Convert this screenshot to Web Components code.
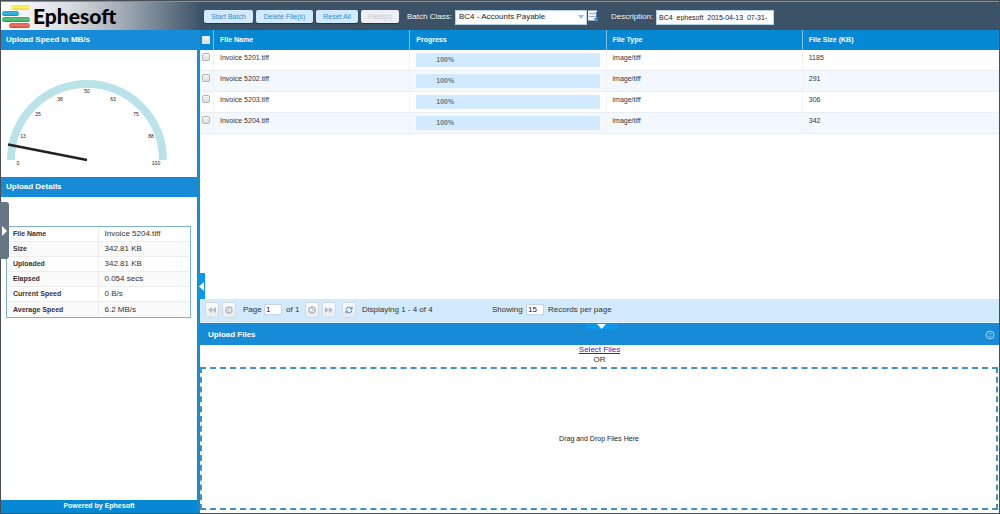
<!DOCTYPE html>
<html lang="en">
<head>
<meta charset="utf-8">
<title>Ephesoft - Upload Batch</title>
<style>
  html, body { margin: 0; height: 100%; }
  body { font: 8px/12px "Liberation Sans", Arial, sans-serif; color: #333; background: #fff; }
</style>
</head>
<body>
<eph-app></eph-app>
<script>
const define = (name, html, init) => {
  const tpl = document.createElement('template');
  tpl.innerHTML = html;
  customElements.define(name, class extends HTMLElement {
    constructor() {
      super();
      this.attachShadow({ mode: 'open' }).append(tpl.content.cloneNode(true));
    }
    connectedCallback() { if (init && !this.ready) { this.ready = true; init(this, this.shadowRoot); } }
  });
};

define('eph-logo', `
<style>
  :host { display: flex; align-items: center; gap: 3px; padding-left: 1px; color: #000; font: 900 21px/26px Lato, "Open Sans", sans-serif; }
  svg { display: block; flex: none; }
</style>
<svg width="28" height="26" viewBox="0 0 28 26" aria-hidden="true">
  <defs>
    <linearGradient id="y" x2="0" y2="1"><stop stop-color="#f6e84c"/><stop offset=".5" stop-color="#f9f06a"/><stop offset="1" stop-color="#e8d53a"/></linearGradient>
    <linearGradient id="b" x2="0" y2="1"><stop stop-color="#2a9fcf"/><stop offset=".5" stop-color="#3db4dc"/><stop offset="1" stop-color="#1c89b8"/></linearGradient>
    <linearGradient id="g" x2="0" y2="1"><stop stop-color="#3fae62"/><stop offset=".5" stop-color="#58c27a"/><stop offset="1" stop-color="#2f9550"/></linearGradient>
    <linearGradient id="r" x2="0" y2="1"><stop stop-color="#e05a4c"/><stop offset=".5" stop-color="#ee7565"/><stop offset="1" stop-color="#cc4638"/></linearGradient>
  </defs>
  <rect x="9" y="2" width="19" height="5" rx="2.500" fill="url(#y)"/>
  <rect x="0" y="8" width="17" height="5" rx="2.500" fill="url(#b)"/>
  <rect x="0" y="14" width="28" height="5" rx="2.500" fill="url(#g)"/>
  <rect x="7" y="20" width="21" height="5" rx="2.500" fill="url(#r)"/>
</svg>
<span>Ephesoft</span>`);

define('eph-button', `
<style>
  :host { display: block; }
  button { box-sizing: border-box; width: 100%; height: 13px; padding: 0; border: 0; border-radius: 2px;
    background: #d1eafd; color: #2b8fce; font: inherit; line-height: 13px; white-space: nowrap;
    box-shadow: 0 1px 1px #1f3242; cursor: pointer; }
  button:disabled { background: #eceff3; color: #bfc6cd; cursor: default; }
</style>
<button type="button"><slot></slot></button>`,
(host, root) => { root.querySelector('button').disabled = host.hasAttribute('disabled'); });

define('eph-toolbar', `
<style>
  :host { display: flex; align-items: center; height: 29px; box-sizing: border-box; border-top: 1px solid #8b8f94;
    background: linear-gradient(90deg, #fff 0, #dfe2e5 60px, #a3adb7 120px, #3c5367 200px); color: #f1f5f8; font-size: 7px; white-space: nowrap; }
  eph-logo { flex: 0 0 202px; }
  .buttons { display: grid; grid-template-columns: 49px 57px 42px 38px; gap: 3px; margin: 0 8px 0 0; }
  label { width: 45px; margin: 2px 3px 0 0; font-size: 8px; line-height: 12px; }
  select, input { box-sizing: border-box; height: 15px; margin: 2px 0 0; padding: 0 3px; border: 1px solid #b5d4ea; border-radius: 0;
    background: #fff; color: #222; font: inherit; }
  .pick { display: grid; width: 132px; }
  select { grid-area: 1 / 1; appearance: none; width: 100%; font-size: 8px; }
  .arrow { grid-area: 1 / 1; justify-self: end; align-self: center; margin: 2px 3px 0 0; pointer-events: none; }
  .list { margin: 0 13px 0 1px; }
  input { width: 118px; padding: 0 2px; font-size: 7px; line-height: 13px; }
  .wide { width: 42px; }
</style>
<eph-logo></eph-logo>
<div class="buttons">
  <eph-button>Start Batch</eph-button>
  <eph-button>Delete File(s)</eph-button>
  <eph-button>Reset All</eph-button>
  <eph-button disabled>Field(s)</eph-button>
</div>
<label for="batch">Batch Class:</label>
<div class="pick">
  <select id="batch"><option>BC4 - Accounts Payable</option></select>
  <svg class="arrow" width="6" height="4" viewBox="0 0 6 4" aria-hidden="true"><path d="M0 0h6L3 4z" fill="#8cc3e3"/></svg>
</div>
<svg class="list" width="10" height="12" viewBox="0 0 10 12" aria-hidden="true">
  <rect width="9" height="11" fill="#eef1f4"/>
  <path d="M0 .5h9M1 3.500h7M1 6.500h7M0 10.500h8" stroke="#a3adb8" stroke-width="1"/>
  <path d="M8.500 2v7M6.500 8.500l2 3 1.500-3z" stroke="#4a86c8" fill="#4a86c8"/>
</svg>
<label class="wide" for="desc">Description:</label>
<input id="desc" type="text" value="BC4_ephesoft_2015-04-13_07-31-">`);

define('eph-panel', `
<style>
  :host { display: flex; flex-direction: column; background: #fff; }
  h2 { display: flex; align-items: center; justify-content: space-between; flex: none; margin: 0; height: 20px;
    padding: 0 4px 0 var(--title-inset, 5px); background: #178bd5; color: #fff; font-size: 8px; line-height: 20px; }
  .body { flex: 1; display: flex; flex-direction: column; }
</style>
<h2><slot name="title"></slot><slot name="tool"></slot></h2>
<div class="body"><slot></slot></div>`);

define('eph-gauge', `
<style>
  :host { display: block; }
  svg { display: block; width: 196px; height: 127px; }
  text { font: 5px "Liberation Sans", Arial, sans-serif; fill: #222; text-anchor: middle; }
</style>
<svg viewBox="0 0 196 127" role="img" aria-label="Upload speed gauge">
  <path d="M10 110a76 76 0 0 1 152 0" fill="none" stroke="#b9e3e9" stroke-width="8"/>
  <path d="M86 110L7 94.500" stroke="#222" stroke-width="2.500"/>
  <text x="17" y="115">0</text><text x="22" y="88">13</text><text x="37" y="66">25</text>
  <text x="59" y="51">38</text><text x="86" y="43">50</text><text x="112" y="51">63</text>
  <text x="135" y="66">75</text><text x="150" y="88">88</text><text x="155" y="115">100</text>
</svg>`);

define('eph-details', `
<style>
  :host { display: block; padding: 29px 6px 0 5px; }
  table { width: 100%; border: 1px solid #7fb0d0; border-collapse: separate; border-spacing: 0; table-layout: fixed; }
  th, td { height: 15px; padding: 0 6px; box-sizing: border-box; text-align: left; font-size: 8px; line-height: 14px; border-bottom: 1px solid #ededed; }
  th { width: 50%; font-size: 7px; border-right: 1px solid #ededed; }
  tr:nth-child(even) { background: #fafafa; }
  tr:last-child > * { border-bottom: 0; }
</style>
<table><tbody></tbody></table>`,
(host, root) => {
  root.querySelector('tbody').innerHTML = [
    ['File Name', 'Invoice 5204.tiff'], ['Size', '342.81 KB'], ['Uploaded', '342.81 KB'],
    ['Elapsed', '0.054 secs'], ['Current Speed', '0 B/s'], ['Average Speed', '6.2 MB/s']
  ].map(([k, v]) => `<tr><th scope="row">${k}</th><td>${v}</td></tr>`).join('');
});

define('eph-sidebar', `
<style>
  :host { position: relative; display: flex; flex-direction: column; width: 196px; flex: none; background: #fff; }
  .details { flex: 1; }
  footer { height: 13px; background: #0788d5; color: #fff; font-weight: bold; font-size: 7px; line-height: 12px; text-align: center; }
  .drawer { position: absolute; left: -1px; top: 172px; width: 9px; height: 57px; padding: 0; border: 0; border-radius: 0 3px 3px 0;
    background: #667684; display: flex; align-items: center; justify-content: center; }
</style>
<eph-panel><span slot="title">Upload Speed in MB/s</span><eph-gauge></eph-gauge></eph-panel>
<eph-panel class="details"><span slot="title">Upload Details</span><eph-details></eph-details></eph-panel>
<footer>Powered by Ephesoft</footer>
<button class="drawer" type="button" aria-label="Open menu"><svg width="5" height="10" viewBox="0 0 5 10"><path d="M0 0l5 5-5 5z" fill="#fff"/></svg></button>`);

define('eph-file-grid', `
<style>
  :host { display: block; flex: 1; background: #fff; font-size: 7px; }
  table { width: 100%; border-collapse: separate; border-spacing: 0; table-layout: fixed; }
  th { box-sizing: border-box; height: 20px; padding: 0 6px; background: #0788d5; color: #fff; text-align: left; border-right: 1px solid #7fbfe8; line-height: 12px; }
  td { box-sizing: border-box; height: 21px; padding: 2px 6px 0; vertical-align: top; line-height: 12px; border-right: 1px solid #f0f2f4; border-bottom: 1px solid #e9eef2; }
  tr > :last-child { border-right: 0; }
  tbody tr:nth-child(even) { background: #f2f8fd; }
  .check { width: 14px; padding-left: 2px; padding-right: 0; }
  td.check, .progress { padding-top: 3px; }
  input { display: block; appearance: none; box-sizing: border-box; width: 8px; height: 8px; margin: 0; border: 1px solid #b4b4b4; border-radius: 2px;
    background: linear-gradient(#f4f4f4, #dedede); }
  th input { border-radius: 0; border-color: #d8e4ec; }
  .bar { height: 14px; background: #d1eafd; color: #697a87; font-weight: bold; line-height: 14px; padding-left: 20px; }
</style>
<table>
  <thead><tr>
    <th class="check"><input type="checkbox" aria-label="Select all files"></th>
    <th>File Name</th><th>Progress</th><th>File Type</th><th>File Size (KB)</th>
  </tr></thead>
  <tbody></tbody>
</table>`,
(host, root) => {
  root.querySelector('tbody').innerHTML = [['5201', 1185], ['5202', 291], ['5203', 306], ['5204', 342]]
    .map(([n, size]) => `<tr><td class="check"><input type="checkbox" aria-label="Select Invoice ${n}.tiff"></td>
      <td>Invoice ${n}.tiff</td><td class="progress"><div class="bar">100%</div></td><td>image/tiff</td><td>${size}</td></tr>`).join('');
});

define('eph-pager', `
<style>
  :host { display: flex; align-items: center; height: 23px; box-sizing: border-box; padding: 0 5px 2px; background: #d1eafd; color: #333; white-space: nowrap; }
  button { display: grid; place-items: center; box-sizing: border-box; width: 14px; height: 16px; margin: 0 3px 0 0; padding: 0;
    border: 1px solid #d3dbe1; border-radius: 2px; background: linear-gradient(#fbfcfd, #e7ebee); }
  svg { display: block; fill: none; stroke: #b4bcc3; }
  input { box-sizing: border-box; width: 18px; height: 11px; margin: 0 4px 0 0; padding: 0 1px; border: 1px solid #c5d5e1; background: #fff; color: #222; font: inherit; line-height: 9px; }
  .page { width: 17px; margin: 0 4px; }
  .of { width: 16px; margin-right: 3px; }
  .refresh { margin: 0 6px 0 3px; }
  .count { width: 130px; }
  .showing { width: 30px; margin-right: 4px; }
</style>
<button type="button" aria-label="First page" disabled><svg width="8" height="8" viewBox="0 0 8 8"><path d="M4 1v6L0 4zM8 1v6L4 4z" fill="#b4bcc3" stroke="none"/></svg></button>
<button type="button" aria-label="Previous page" disabled><svg width="8" height="8" viewBox="0 0 8 8"><circle cx="4" cy="4" r="3" stroke-width="1.500"/><path d="M4.500 2.500L3 4l1.500 1.500"/></svg></button>
<label class="page" for="page">Page</label><input id="page" type="text" value="1">
<span class="of">of 1</span>
<button type="button" aria-label="Next page" disabled><svg width="8" height="8" viewBox="0 0 8 8"><circle cx="4" cy="4" r="3" stroke-width="1.500"/><path d="M3.500 2.500L5 4 3.500 5.500"/></svg></button>
<button type="button" aria-label="Last page" disabled><svg width="8" height="8" viewBox="0 0 8 8"><path d="M0 1v6l4-3zM4 1v6l4-3z" fill="#b4bcc3" stroke="none"/></svg></button>
<button class="refresh" type="button" aria-label="Refresh"><svg width="8" height="8" viewBox="0 0 8 8" style="stroke:#4f88ae"><path d="M1 3.500A3 3 0 0 1 6.500 2.500M7 .5v2.500H5M7 4.500A3 3 0 0 1 1.500 5.500M1 7.500V5H3"/></svg></button>
<span class="count">Displaying 1 - 4 of 4</span>
<label class="showing" for="size">Showing</label><input id="size" type="text" value="15">
<span>Records per page</span>`);

define('eph-upload', `
<style>
  :host { display: flex; flex-direction: column; flex: 1; text-align: center; line-height: 10px; }
  a { color: #3a22c4; }
  .drop { flex: 1; display: grid; place-items: center; margin: 2px 1px 3px 0; font-size: 7px; color: #222; border: 2px dashed #4590bc; }
</style>
<div><a href="#select">Select Files</a></div>
<div>OR</div>
<div class="drop">Drag and Drop Files Here</div>`);

define('eph-workspace', `
<style>
  :host { position: relative; display: flex; flex-direction: column; flex: 1; min-width: 0; border-left: 3px solid #178bd5; }
  .split { position: relative; height: 2px; background: #178bd5; border-top: 1px solid #e5f3fd; flex: none; }
  eph-panel { height: 188px; flex: none; --title-inset: 8px; }
  eph-upload { flex: 1; }
  .handle { position: absolute; display: grid; place-items: center; padding: 0; border: 0; background: #0d97ea; z-index: 1; }
  .west { left: -2px; top: 243px; width: 7px; height: 26px; }
  .south { left: 50%; margin-left: -14px; top: 0; width: 32px; height: 6px; }
  svg { display: block; }
</style>
<eph-file-grid></eph-file-grid>
<eph-pager></eph-pager>
<div class="split"><button class="handle south" type="button" aria-label="Collapse upload panel"><svg width="9" height="5" viewBox="0 0 9 5"><path d="M0 0h9L4.500 5z" fill="#fff"/></svg></button></div>
<eph-panel>
  <span slot="title">Upload Files</span>
  <svg slot="tool" width="10" height="10" viewBox="0 0 10 10" fill="none" stroke="#9fd0f2" aria-hidden="true"><circle cx="5" cy="5" r="4"/><path d="M3 2.500l2 2 2-2M3 5.500l2 2 2-2"/></svg>
  <eph-upload></eph-upload>
</eph-panel>
<button class="handle west" type="button" aria-label="Collapse side panel"><svg width="5" height="9" viewBox="0 0 5 9"><path d="M5 0v9L0 4.500z" fill="#fff"/></svg></button>`);

define('eph-app', `
<style>
  :host { display: flex; flex-direction: column; box-sizing: border-box; min-height: 100vh; border: 1px solid #4a4f55; }
  main { flex: 1; display: flex; }
</style>
<eph-toolbar></eph-toolbar>
<main><eph-sidebar></eph-sidebar><eph-workspace></eph-workspace></main>`);
</script>
</body>
</html>
